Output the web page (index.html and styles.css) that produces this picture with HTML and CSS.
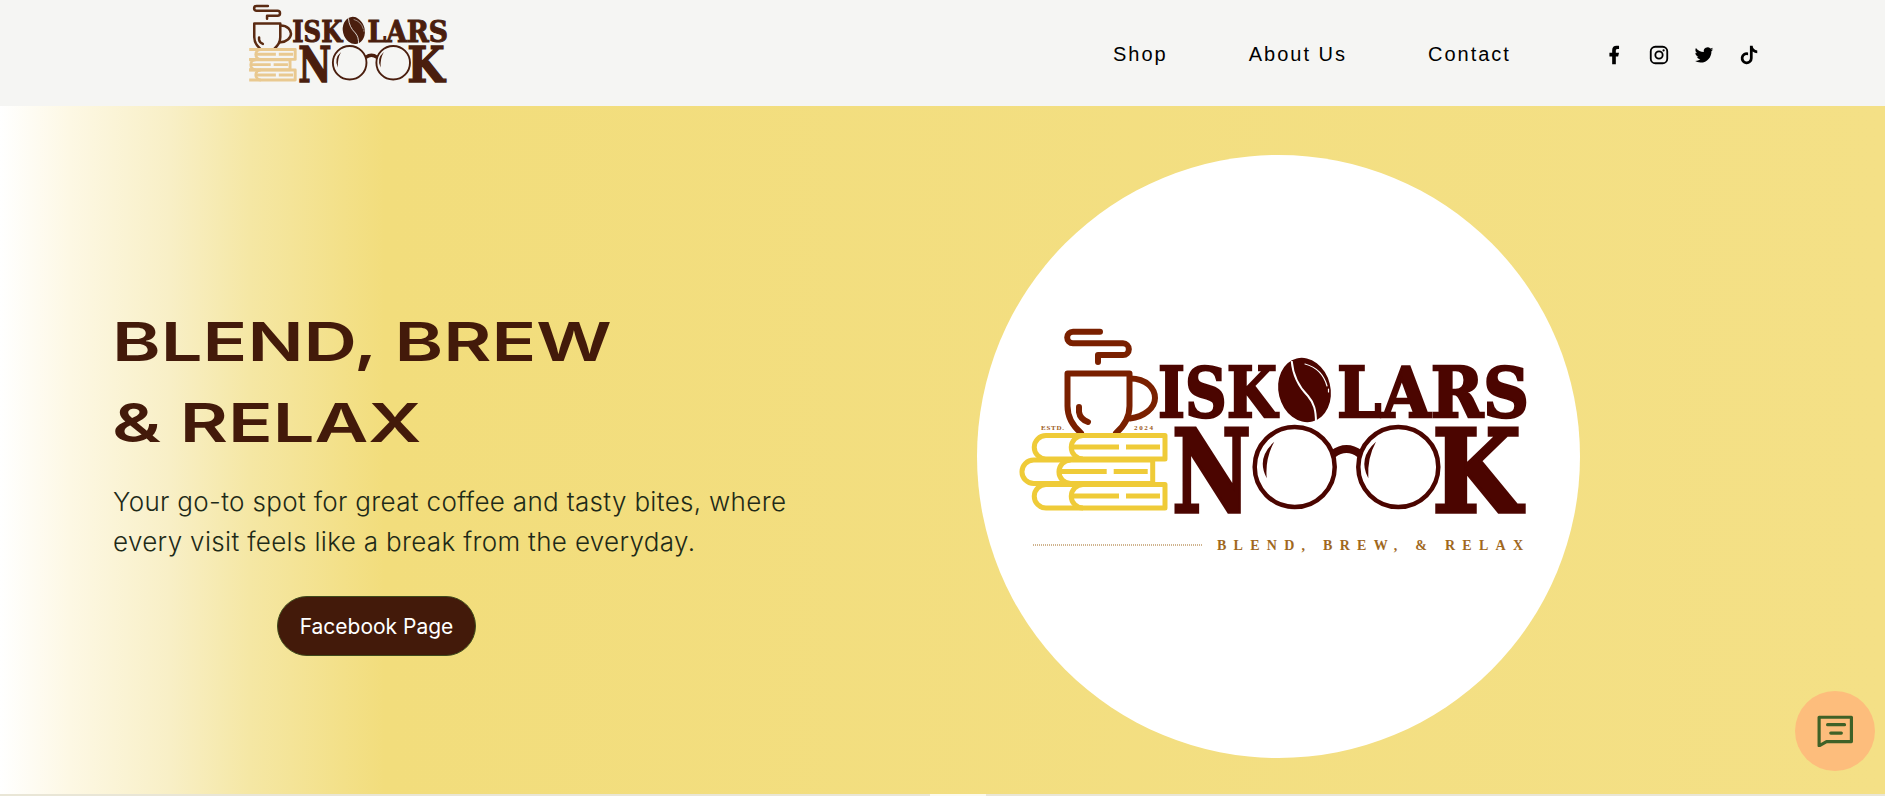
FILE: index.html
```html
<!DOCTYPE html>
<html lang="en">
<head>
<meta charset="utf-8">
<title>Iskolars Nook</title>
<link rel="stylesheet" href="styles.css">
</head>
<body>
<svg class="defs" width="0" height="0" aria-hidden="true">
  <defs>
    <symbol id="logo-art" viewBox="0 0 540 250">
      <g class="cup">
        <path d="M90 11.7H63a5.8 5.8 0 0 0 0 11.6H113a5.8 5.8 0 0 1 0 11.7H88V42"/>
        <path d="M57.5 64V53.5H119.500V86C119.500 98 113 107 106 113M57.500 53.500V86C57.500 98 64 107 71 113"/>
        <path d="M120 58.500C137 58.500 145 69 145 78C145 88 134 97 120 98.500"/>
        <path d="M69 87V92Q70 99 78 102"/>
      </g>
      <g class="books">
        <g>
          <path d="M155 115.500H36a11.750 11.750 0 0 0 0 23.500H155Z"/>
          <path d="M73 115.500a11.750 11.750 0 0 0 0 23.500"/>
          <path d="M63 127H109M116 127H150"/>
        </g>
        <g transform="translate(-12.300 24.500)">
          <path d="M155 115.500H36a11.750 11.750 0 0 0 0 23.500H155Z"/>
          <path d="M73 115.500a11.750 11.750 0 0 0 0 23.500"/>
          <path d="M63 127H109M116 127H150"/>
        </g>
        <g transform="translate(0 49)">
          <path d="M155 115.500H36a11.750 11.750 0 0 0 0 23.500H155Z"/>
          <path d="M73 115.500a11.750 11.750 0 0 0 0 23.500"/>
          <path d="M63 127H109M116 127H150"/>
        </g>
      </g>
      <g class="ink">
        <ellipse cx="294.500" cy="70" rx="26" ry="32.500" transform="rotate(-14 294.500 70)"/>
        <path class="bean-line" d="M281.700 41C283 56 288 66 298 76C304 83 306 90 306 103"/>
        <path class="bean-shine" d="M295 44C306 47 314 55 317 66"/>
        <path class="bean-shine" d="M318.500 69V72"/>
        <circle class="lens" cx="284.700" cy="147" r="40"/>
        <circle class="lens" cx="388.300" cy="147" r="40"/>
        <path class="bridge" d="M323 134Q336.500 124 350 134"/>
        <path d="M264.300 121.700Q246 138 256.700 158.300Q255 138 264.300 121.700Z"/>
        <path d="M366 121.700Q347.500 138 358.300 158.300Q357 138 366 121.700Z"/>
      </g>
    </symbol>
  </defs>
</svg>

<header class="topbar">
  <a class="brand" href="#">
    <svg class="logo logo-small" viewBox="0 0 540 250" role="img" aria-label="Iskolars Nook">
      <use href="#logo-art"/>
      <text class="w1" x="148" y="97" textLength="119" lengthAdjust="spacingAndGlyphs">ISK</text>
      <text class="w1" x="327" y="97" textLength="192" lengthAdjust="spacingAndGlyphs">LARS</text>
      <text class="w2" x="162" y="192" textLength="79" lengthAdjust="spacingAndGlyphs">N</text>
      <text class="w2" x="422" y="192" textLength="89" lengthAdjust="spacingAndGlyphs">K</text>
    </svg>
  </a>
  <nav class="menu">
    <a href="#">Shop</a>
    <a href="#">About Us</a>
    <a href="#">Contact</a>
  </nav>
  <div class="social">
    <svg viewBox="0 0 24 24"><path d="M14 13.500h2.500l1-4H14v-2c0-1.030 0-2 2-2h1.500V2.140c-.326-.043-1.557-.14-2.857-.14C11.928 2 10 3.657 10 6.700v2.800H7v4h3V22h4v-8.500z"/></svg>
    <svg viewBox="0 0 24 24"><rect class="ig" x="3" y="3" width="18" height="18" rx="5"/><circle class="ig" cx="12" cy="12" r="4"/><circle cx="17" cy="7" r="1.200"/></svg>
    <svg viewBox="0 0 24 24"><path d="M22.162 5.656a8.384 8.384 0 0 1-2.402.658A4.196 4.196 0 0 0 21.600 4c-.82.488-1.719.83-2.656 1.015a4.182 4.182 0 0 0-7.126 3.814 11.874 11.874 0 0 1-8.620-4.370 4.168 4.168 0 0 0-.566 2.103c0 1.450.738 2.731 1.860 3.481a4.168 4.168 0 0 1-1.894-.523v.052a4.185 4.185 0 0 0 3.355 4.101 4.210 4.210 0 0 1-1.890.072A4.185 4.185 0 0 0 7.970 16.650a8.394 8.394 0 0 1-6.191 1.732 11.830 11.830 0 0 0 6.410 1.880c7.693 0 11.900-6.373 11.900-11.900 0-.18-.005-.362-.013-.54a8.496 8.496 0 0 0 2.087-2.165z"/></svg>
    <svg viewBox="0 0 24 24"><path d="M16 8.245V15.500a6.500 6.500 0 1 1-5-6.326v3.163a3.500 3.500 0 1 0 2 3.163V2h3a5 5 0 0 0 5 5v3a7.966 7.966 0 0 1-5-1.755z"/></svg>
  </div>
</header>

<main class="hero">
  <section class="intro">
    <h1 class="title">BLEND, BREW<br>&amp; RELAX</h1>
    <p class="lead">Your go-to spot for great coffee and tasty bites, where<br>every visit feels like a break from the everyday.</p>
    <a class="cta" href="#">Facebook Page</a>
  </section>
  <div class="disc">
    <svg class="logo logo-large" viewBox="0 0 540 250" role="img" aria-label="Iskolars Nook, established 2024">
      <use href="#logo-art"/>
      <text class="w1" x="148" y="97" textLength="119" lengthAdjust="spacingAndGlyphs">ISK</text>
      <text class="w1" x="327" y="97" textLength="192" lengthAdjust="spacingAndGlyphs">LARS</text>
      <text class="w2" x="162" y="192" textLength="79" lengthAdjust="spacingAndGlyphs">N</text>
      <text class="w2" x="422" y="192" textLength="89" lengthAdjust="spacingAndGlyphs">K</text>
      <text class="estd" x="31" y="110" textLength="23">ESTD.</text>
      <text class="estd" x="124" y="110" textLength="19">2024</text>
      <line class="rule" x1="23" y1="225" x2="193" y2="225"/>
      <text class="tag" x="207" y="230" textLength="306">BLEND, BREW, &amp; RELAX</text>
    </svg>
  </div>
</main>

<div class="edge"><span class="edge-mark"></span></div>

<button class="chat" type="button" aria-label="Chat">
  <svg viewBox="0 0 34 30"><path class="chat-line" d="M2 2H32.500V25H9L2 29Z"/><path class="chat-line" d="M10 9H26M13 17H23"/></svg>
</button>
</body>
</html>
```

FILE: styles.css
```css
* { box-sizing: border-box; }

html, body {
  margin: 0;
  height: 796px;
  overflow: hidden;
  background: #fff;
}

.defs { position: absolute; }

.topbar {
  display: flex;
  align-items: flex-start;
  height: 106px;
  background: #f5f5f3;
}

.brand { display: block; margin-left: 230px; padding-top: 1px; width: 227px; }

.logo { display: block; overflow: visible; }
.logo-small {
  width: 227px;
  height: 105px;
  --ink: #4a1e0e;
  --cup: #5a2a12;
  --book: #e9c990;
  --book-w: 7;
  --book-clip: polygon(37px 0, 540px 0, 540px 250px, 37px 250px);
  --bean-gap: #f5f5f3;
}
.logo-large {
  width: 540px;
  height: 250px;
  --ink: #4b0500;
  --cup: #7a2000;
  --book: #efcb38;
  --book-w: 5;
  --book-clip: none;
  --bean-gap: #fff;
}

.cup path { fill: none; stroke: var(--cup); stroke-width: 6; stroke-linecap: round; stroke-linejoin: round; }
.books { clip-path: var(--book-clip); }
.books path { fill: none; stroke: var(--book); stroke-width: var(--book-w); stroke-linejoin: round; }
.ink { fill: var(--ink); }
.bean-line { fill: none; stroke: var(--bean-gap); stroke-width: 2; }
.bean-shine { fill: none; stroke: var(--bean-gap); stroke-width: 1.200; stroke-linecap: round; }
.lens { fill: none; stroke: var(--ink); stroke-width: 4.500; }
.bridge { fill: none; stroke: var(--ink); stroke-width: 8; }

.w1, .w2 {
  font-family: "DejaVu Serif", "Liberation Serif", serif;
  font-weight: 700;
  fill: var(--ink);
  stroke: var(--ink);
}
.w1 { font-size: 70px; stroke-width: 2.500; }
.w2 { font-size: 115px; stroke-width: 3.500; }

.estd {
  font-family: "Liberation Serif", serif;
  font-weight: 700;
  font-size: 7px;
  fill: #9a5a20;
}
.tag {
  font-family: "Liberation Serif", serif;
  font-weight: 700;
  font-size: 14px;
  fill: #a0681e;
}
.rule { stroke: #a0681e; stroke-width: 1; stroke-dasharray: 1 1; }

.menu {
  display: flex;
  gap: 81px;
  margin-left: 656px;
  padding-top: 43px;
}
.menu a {
  font-family: "Liberation Sans", Arial, sans-serif;
  font-size: 20px;
  line-height: 23px;
  letter-spacing: 2px;
  color: #000;
  text-decoration: none;
}

.social {
  display: flex;
  gap: 23px;
  margin-left: 92px;
  padding-top: 44px;
}
.social svg { display: block; width: 22px; height: 22px; fill: #000; }
.social .ig { fill: none; stroke: #000; stroke-width: 2; }

.hero {
  display: flex;
  align-items: flex-start;
  height: 688px;
  padding-top: 49px;
  background: linear-gradient(90deg, #fff 0, #fdf8e4 70px, #f8efc6 170px, #f5e7a4 250px, #f2dd7c 385px, #f4e086 100%);
}

.intro {
  flex: 0 0 977px;
  padding: 146px 0 0 114px;
}

.title {
  margin: 0 0 0 -2px;
  font-family: Inter, "Liberation Sans", sans-serif;
  font-size: 54px;
  font-weight: 600;
  line-height: 81px;
  color: #431a0a;
  transform: scaleX(1.37);
  transform-origin: left top;
}

.lead {
  margin: 19px 0 0 -1px;
  font-family: Inter, "Liberation Sans", sans-serif;
  font-size: 26px;
  font-weight: 300;
  line-height: 40px;
  letter-spacing: .33px;
  color: #1e2a18;
  white-space: nowrap;
}

.cta {
  display: flex;
  align-items: center;
  justify-content: center;
  width: 199px;
  height: 60px;
  margin: 34px 0 0 163px;
  border: 1px solid #3f4a1c;
  border-radius: 30px;
  background: #431a0a;
  color: #fff;
  font-family: Inter, "Liberation Sans", sans-serif;
  font-size: 21px;
  text-decoration: none;
}

.disc {
  flex: 0 0 603px;
  height: 603px;
  padding: 165px 0 0 33px;
  border-radius: 50%;
  background: #fff;
}

.edge {
  display: flex;
  height: 2px;
  background: #e9e6d6;
}
.edge-mark { width: 56px; margin-left: 930px; background: #fbfaf0; }

.chat {
  position: fixed;
  left: 1795px;
  top: 691px;
  display: flex;
  align-items: center;
  justify-content: center;
  width: 80px;
  height: 80px;
  padding: 0;
  border: 0;
  border-radius: 50%;
  background: #fdbd7c;
}
.chat svg { display: block; width: 36px; height: 32px; }
.chat-line { fill: none; stroke: #3f6127; stroke-width: 3; stroke-linecap: round; stroke-linejoin: round; }
```
